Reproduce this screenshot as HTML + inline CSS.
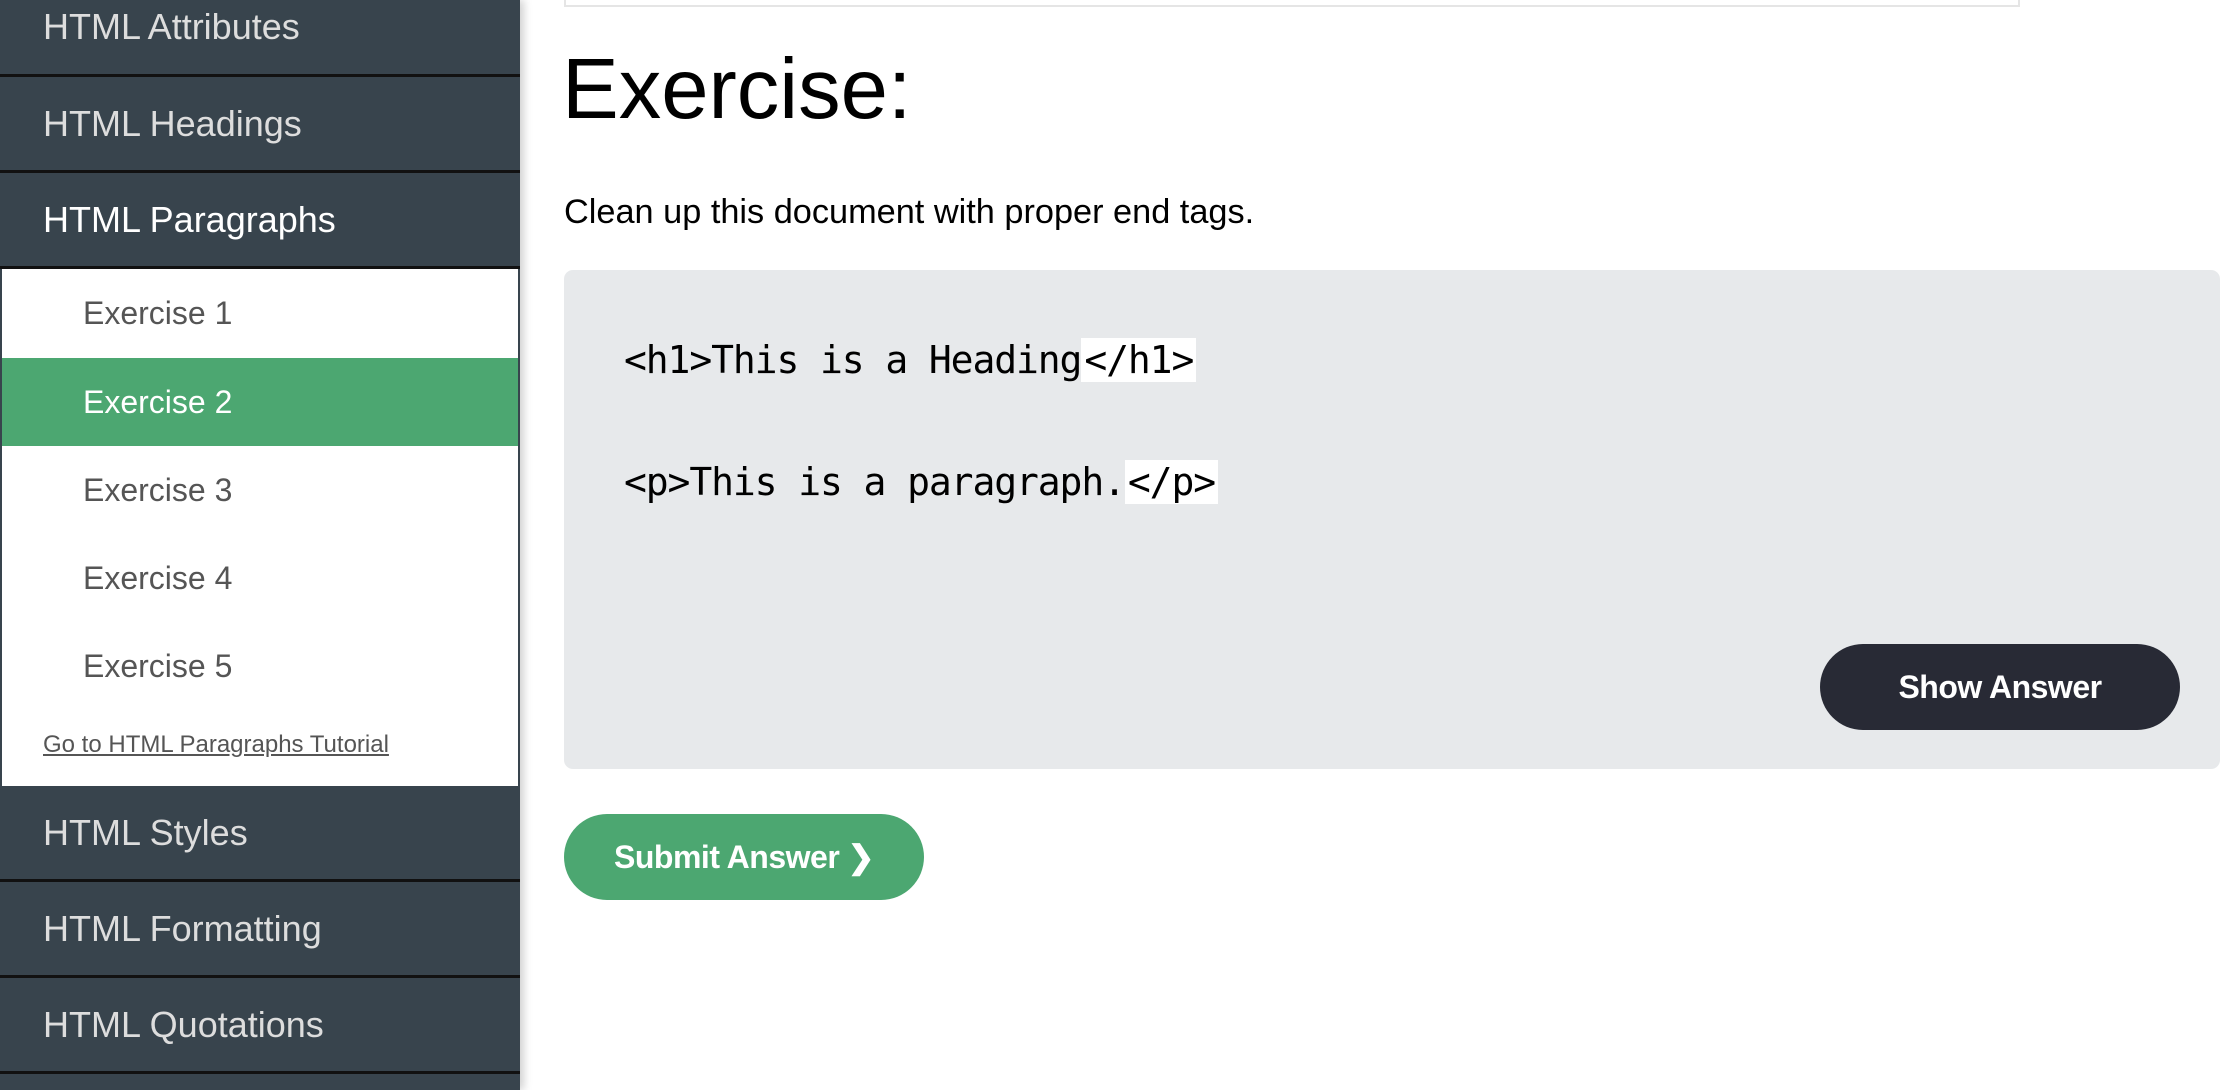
<!DOCTYPE html>
<html><head><meta charset="utf-8"><style>
*{margin:0;padding:0;box-sizing:border-box}
html,body{width:2228px;height:1090px;overflow:hidden;background:#fff;font-family:"Liberation Sans",Arial,sans-serif}
#side{position:absolute;left:0;top:0;width:520px;height:1090px;background:#38444d;box-shadow:4px 0 8px rgba(0,0,0,0.18)}
.row{position:absolute;left:0;width:520px;color:#ddd;font-size:36px;padding-left:43px;display:flex;align-items:center;border-bottom:3px solid #111}
.wh{position:absolute;left:0;top:269px;width:520px;height:517px;background:#fff;border-left:2px solid #38444d;border-right:2px solid #38444d}
.ex{position:absolute;left:0;width:516px;height:88px;color:#555;font-size:32px;padding-left:81px;display:flex;align-items:center}
.ex.on{background:#4ca771;color:#fff}
.link{position:absolute;left:41px;top:733px;font-size:24px;color:#555;text-decoration:underline}
.topbox{position:absolute;left:564px;top:-10px;width:1456px;height:17px;border:2px solid #e5e5e5;border-top:none}
h1{position:absolute;left:562px;top:40px;font-size:85px;font-weight:normal;color:#000;line-height:100px}
.desc{position:absolute;left:564px;top:193px;font-size:34.3px;color:#000}
.code{position:absolute;left:564px;top:270px;width:1656px;height:499px;background:#e7e9eb;border-radius:9px}
.ln{position:absolute;left:60px;font-family:"DejaVu Sans Mono","Liberation Mono",monospace;font-size:38px;letter-spacing:-1.1px;color:#000;line-height:46px}
.ln span{background:#fff;padding:0 3px}
.btn{position:absolute;border-radius:50px;color:#fff;font-weight:bold;display:flex;align-items:center;justify-content:center;font-size:32px;letter-spacing:-0.5px}
</style></head><body>
<div id="side">
<div class="row" style="top:-20px;height:97px">HTML Attributes</div>
<div class="row" style="top:77px;height:96px">HTML Headings</div>
<div class="row" style="top:173px;height:96px;color:#fff">HTML Paragraphs</div>
<div class="wh">
<div class="ex" style="top:0">Exercise 1</div>
<div class="ex on" style="top:89px">Exercise 2</div>
<div class="ex" style="top:177px">Exercise 3</div>
<div class="ex" style="top:265px">Exercise 4</div>
<div class="ex" style="top:353px">Exercise 5</div>
<div class="link" style="top:462px">Go to HTML Paragraphs Tutorial</div>
</div>
<div class="row" style="top:786px;height:96px">HTML Styles</div>
<div class="row" style="top:882px;height:96px">HTML Formatting</div>
<div class="row" style="top:978px;height:96px">HTML Quotations</div>
</div>
<div class="topbox"></div>
<h1>Exercise:</h1>
<div class="desc">Clean up this document with proper end tags.</div>
<div class="code">
<div class="ln" style="top:67px">&lt;h1&gt;This is a Heading<span>&lt;/h1&gt;</span></div>
<div class="ln" style="top:189px">&lt;p&gt;This is a paragraph.<span>&lt;/p&gt;</span></div>
<div class="btn" style="left:1256px;top:374px;width:360px;height:86px;background:#282a35">Show Answer</div>
</div>
<div class="btn" style="left:564px;top:814px;width:360px;height:86px;background:#4ca771">Submit Answer ❯</div>
</body></html>
